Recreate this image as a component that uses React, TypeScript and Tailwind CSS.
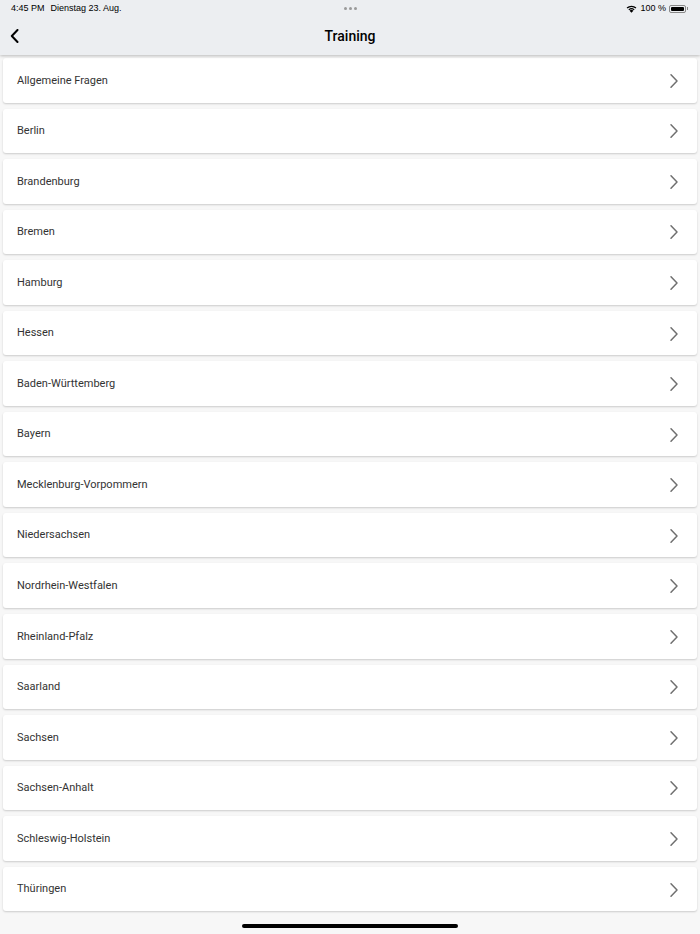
import React from 'react';

const items = [
  'Allgemeine Fragen',
  'Berlin',
  'Brandenburg',
  'Bremen',
  'Hamburg',
  'Hessen',
  'Baden-Württemberg',
  'Bayern',
  'Mecklenburg-Vorpommern',
  'Niedersachsen',
  'Nordrhein-Westfalen',
  'Rheinland-Pfalz',
  'Saarland',
  'Sachsen',
  'Sachsen-Anhalt',
  'Schleswig-Holstein',
  'Thüringen',
];

const Chevron = () => (
  <svg width="10" height="16" viewBox="0 0 10 16" fill="none">
    <path d="M2 1.8 L8 8 L2 14.2" stroke="#6f6f6f" strokeWidth="1.5" strokeLinecap="round" strokeLinejoin="round" />
  </svg>
);

const App = () => {
  return (
    <div className="w-[700px] h-[934px] bg-[#f7f7f7] flex flex-col overflow-hidden" style={{ fontFamily: 'Roboto, "Liberation Sans", sans-serif' }}>
      {/* Status bar + header */}
      <div className="bg-[#eceef1] shadow-[0_1px_3px_rgba(0,0,0,0.25)] relative z-10">
        <div className="h-[17px] flex items-center justify-between px-[11px] text-[9px] font-medium text-black" style={{ fontFamily: '"Liberation Sans", Arial, sans-serif' }}>
          <div className="flex gap-[6px] w-[200px]">
            <span>4:45 PM</span>
            <span>Dienstag 23. Aug.</span>
          </div>
          <div className="flex gap-[2px]">
            <span className="w-[3px] h-[3px] rounded-full bg-[#9a9a9a]" />
            <span className="w-[3px] h-[3px] rounded-full bg-[#9a9a9a]" />
            <span className="w-[3px] h-[3px] rounded-full bg-[#9a9a9a]" />
          </div>
          <div className="flex items-center gap-[3px] w-[200px] justify-end pr-[1px]">
            <svg width="11" height="8" viewBox="0 0 11 8">
              <path d="M5.5 7.8 L3.6 5.7 A2.8 2.8 0 0 1 7.4 5.7 Z" fill="#000" />
              <path d="M2.4 4.4 A4.6 4.6 0 0 1 8.6 4.4 L7.8 5.2 A3.5 3.5 0 0 0 3.2 5.2 Z" fill="#000" />
              <path d="M0.6 2.6 A7.2 7.2 0 0 1 10.4 2.6 L9.5 3.5 A6 6 0 0 0 1.5 3.5 Z" fill="#000" />
            </svg>
            <span>100 %</span>
            <div className="flex items-center">
              <div className="w-[17px] h-[8px] rounded-[2px] border border-[#888] p-[1px]">
                <div className="w-full h-full bg-black rounded-[1px]" />
              </div>
              <div className="w-[1px] h-[3px] bg-[#888] ml-[1px]" />
            </div>
          </div>
        </div>
        <div className="h-[38px] flex items-center relative">
          <div className="absolute left-[10px] top-[12px]">
            <svg width="10" height="14" viewBox="0 0 10 14" fill="none">
              <path d="M7.5 1 L1.8 7 L7.5 13" stroke="#000" strokeWidth="2" strokeLinecap="round" strokeLinejoin="round" />
            </svg>
          </div>
          <div className="flex-1 text-center text-[14px] font-medium text-black">Training</div>
        </div>
      </div>

      {/* List */}
      <div className="flex flex-col gap-[6px] pt-[3px] px-[3px]">
        {items.map((name) => (
          <div
            key={name}
            className="h-[44.56px] bg-white rounded-[3px] shadow-[0_1px_2px_rgba(0,0,0,0.18)] flex items-center justify-between pl-[14px] pr-[18px] pt-[1px]"
          >
            <span className="text-[11px] text-[#333]">{name}</span>
            <Chevron />
          </div>
        ))}
      </div>

      <div className="flex-1" />
      <div className="flex justify-center pb-[6px]">
        <div className="w-[216px] h-[4px] rounded-full bg-black" />
      </div>
    </div>
  );
};

export default App;
